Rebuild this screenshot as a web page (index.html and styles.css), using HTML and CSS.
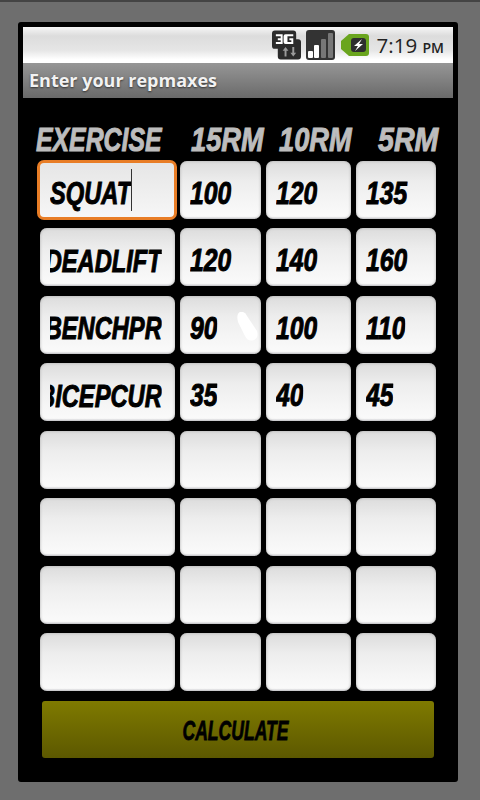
FILE: index.html
```html
<!DOCTYPE html>
<html>
<head>
  <title>Enter your repmaxes</title>
  <link rel="stylesheet" href="styles.css">
</head>
<body>

<div class="phone">
  <div class="status-bar">
    <svg class="icon-3g" width="29" height="30" viewBox="0 0 30 30">
      <path d="M0 3q0-3 3-3h19q3 0 3 3v6h2q3 0 3 3v15q0 3-3 3H9q-3 0-3-3v-8H3q-3 0-3-3z" fill="#2b2b2b"/>
      <path d="M4 4h7v10H4v-2h5v-2H6V8h3V6H4zM22 4v2h-6v6h4v-2h-2V8h4v6h-8q-2 0-2-2V6q0-2 2-2z" fill="#fff"/>
      <path d="M13 27v-6h-2l3-4 3 4h-2v6zM21 17v6h-2l3 4 3-4h-2v-6z" fill="#9a9a9a"/>
    </svg>
    <svg class="icon-signal" width="29" height="30" viewBox="0 0 29 30">
      <rect width="29" height="30" rx="3" fill="#333"/>
      <rect x="2" y="21" width="5" height="7" rx="1" fill="#fff"/>
      <rect x="8" y="15" width="5" height="13" rx="1" fill="#fff"/>
      <rect x="15" y="9" width="5" height="19" rx="1" fill="#777"/>
      <rect x="22" y="3" width="5" height="25" rx="1" fill="#777"/>
    </svg>
    <svg class="icon-battery" width="28" height="22" viewBox="0 0 28 22">
      <path d="M8 0h17q3 0 3 3v16q0 3-3 3H8l-8-7V7z" fill="#6aa51e"/>
      <rect x="10" y="4" width="15" height="14" rx="3" fill="#2e2e2e"/>
      <path d="M21 5l-8 7h4l-3 5 8-7h-4l3-5z" fill="#fff"/>
    </svg>
    <span class="clock">7:19 <small>PM</small></span>
  </div>
  <div class="title-bar">Enter your repmaxes</div>

  <div class="content">
    <div class="table">
      <div class="head">Exercise</div>
      <div class="head head-15">15RM</div>
      <div class="head head-10">10RM</div>
      <div class="head head-5">5RM</div>

      <div class="field focused"><span class="clip">Squat</span><i class="caret"></i></div>
      <div class="field num"><span class="clip">100</span></div>
      <div class="field num"><span class="clip">120</span></div>
      <div class="field num"><span class="clip">135</span></div>

      <div class="field"><span class="clip">Deadlift</span></div>
      <div class="field num"><span class="clip">120</span></div>
      <div class="field num"><span class="clip">140</span></div>
      <div class="field num"><span class="clip">160</span></div>

      <div class="field"><span class="clip">Benchpr</span></div>
      <div class="field num">
        <span class="clip">90</span>
        <svg class="smudge" width="21" height="29" viewBox="0 0 21 29"><path d="M3 0q5-1 7 4l10 15q2 7-3 9-6 2-9-4L1 10Q-1 2 3 0z" fill="#fff"/></svg>
      </div>
      <div class="field num"><span class="clip">100</span></div>
      <div class="field num"><span class="clip">110</span></div>

      <div class="field"><span class="clip">Bicepcur</span></div>
      <div class="field num"><span class="clip">35</span></div>
      <div class="field num"><span class="clip">40</span></div>
      <div class="field num"><span class="clip">45</span></div>

      <div class="field"></div><div class="field"></div><div class="field"></div><div class="field"></div>
      <div class="field"></div><div class="field"></div><div class="field"></div><div class="field"></div>
      <div class="field"></div><div class="field"></div><div class="field"></div><div class="field"></div>
      <div class="field"></div><div class="field"></div><div class="field"></div><div class="field"></div>
    </div>
    <button type="button" class="calculate"><span>Calculate</span></button>
  </div>
</div>

</body>
</html>
```

FILE: styles.css
```css
html, body {
  height: 100%;
}

body {
  margin: 0;
  box-sizing: border-box;
  padding: 20px 22px 18px 18px;
  background-color: #6e6e6e;
  border-top: 2px solid #444;
  font-family: "Liberation Sans", sans-serif;
}

.phone {
  height: 760px;
  box-sizing: border-box;
  border: 5px solid #000;
  border-radius: 3px;
  background-color: #000;
}

.status-bar {
  height: 36px;
  display: flex;
  align-items: center;
  justify-content: flex-end;
  padding-right: 9px;
  background: linear-gradient(#f6f6f6, #dcdcdc 25%, #e6e6e6 65%, #fff 90%);
  color: #222;
}

.icon-3g {
  margin-right: 5px;
}

.icon-signal {
  margin-right: 6px;
}

.icon-battery {
  margin-right: 8px;
}

.clock {
  font-family: "Open Sans", sans-serif;
  font-size: 20.5px;
}

.clock small {
  font-size: 14px;
  font-weight: 600;
}

.title-bar {
  height: 35px;
  line-height: 34px;
  padding-left: 6px;
  background: linear-gradient(#969696, #6a6a6a);
  color: #f2f2f2;
  font-family: "Open Sans", sans-serif;
  font-size: 18px;
  font-weight: 700;
  text-shadow: 0 1px 2px #333;
}

.content {
  padding: 17px 0 0 17px;
}

.table {
  display: grid;
  grid-template-columns: 135px 81px 85px 80px;
  grid-template-rows: 36px repeat(8, 58px);
  column-gap: 5px;
  row-gap: 9.5px;
}

.head,
.clip,
.calculate span {
  font-style: italic;
  font-weight: 700;
  text-transform: uppercase;
}

.head {
  margin-left: -4px;
  padding-top: 7px;
  color: #bdbdbd;
  font-size: 34px;
  line-height: 34px;
  white-space: nowrap;
  transform: scaleX(0.73);
  transform-origin: left;
  -webkit-text-stroke: 1px #bdbdbd;
}

.head-15 {
  margin-left: 11px;
  transform: scaleX(0.8);
}

.head-10 {
  margin-left: 13px;
  transform: scaleX(0.8);
}

.head-5 {
  margin-left: 22px;
  transform: scaleX(0.84);
}

.field {
  position: relative;
  display: flex;
  align-items: center;
  padding-left: 10px;
  border-radius: 7px;
  background: linear-gradient(#dcdcdc, #ededed 35%, #f5f5f5 70%, #fafafa 96%, #d4d4da);
  box-shadow: inset 0 0 3px #aaa;
}

.field.focused {
  margin: -1px -2px -1px -3px;
  border: 3px solid #e87d26;
  border-radius: 7px;
  background: linear-gradient(#e6e6e6, #f6f6f6);
  box-shadow: none;
}

.clip {
  flex: none;
  display: flex;
  justify-content: flex-end;
  max-width: 151px;
  padding-top: 8px;
  overflow: hidden;
  color: #000;
  font-size: 32px;
  white-space: nowrap;
  transform: scaleX(0.74);
  transform-origin: left;
  -webkit-text-stroke: 1px #000;
}

.num .clip {
  font-size: 31px;
  transform: scaleX(0.8);
}

.caret {
  position: absolute;
  top: 6px;
  left: 91px;
  width: 1px;
  height: 42px;
  background-color: #333;
}

.smudge {
  position: absolute;
  top: 16px;
  left: 57px;
}

.calculate {
  display: block;
  width: 392px;
  height: 57px;
  margin: 10px 0 0 2px;
  padding: 3px 6px 0 0;
  border: 0;
  border-radius: 3px;
  background: linear-gradient(#7f7a00, #5c5800);
  color: #000;
  font-family: inherit;
  font-size: 27px;
}

.calculate span {
  display: inline-block;
  transform: scaleX(0.65);
  -webkit-text-stroke: 0.8px #000;
}
```
